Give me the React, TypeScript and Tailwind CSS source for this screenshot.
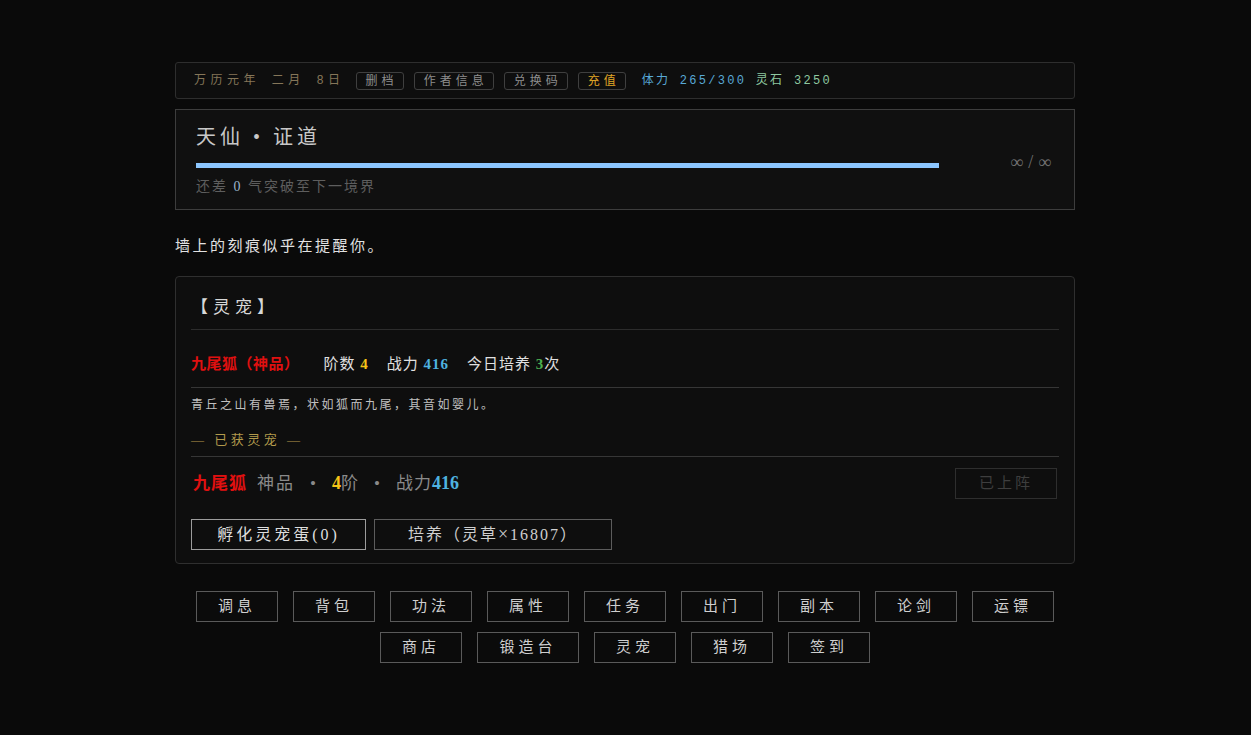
import React from 'react';

// 顶部状态栏按钮
const TopButton: React.FC<{ label: string; gold?: boolean }> = ({ label, gold }) => (
    <span
        className={`inline-flex items-center h-[18px] pl-[9px] pr-[5px] border border-[#3f3f3f] rounded-[3px] text-[12px] tracking-[4px] ${gold ? 'text-[#e0a526]' : 'text-[#8d8d8d]'}`}
    >
        {label}
    </span>
);

// 底部导航按钮
const NavButton: React.FC<{ label: string; wide?: boolean }> = ({ label, wide }) => (
    <button
        className={`h-[31px] ${wide ? 'w-[102px]' : 'w-[82px]'} border border-[#5a5a5a] bg-[#0b0b0b] text-[#cfcfcf] text-[15px] tracking-[4px] flex items-center justify-center`}
    >
        {label}
    </button>
);

const navRow1 = ['调息', '背包', '功法', '属性', '任务', '出门', '副本', '论剑', '运镖'];
const navRow2 = ['商店', '锻造台', '灵宠', '猎场', '签到'];

const mono = { fontFamily: '"Liberation Mono", "Noto Sans CJK SC", monospace' };

const App: React.FC = () => {
    return (
        <div
            className="min-h-[735px] bg-[#0a0a0a] text-[#ccc] pt-[62px]"
            style={{ fontFamily: '"Liberation Serif", "Noto Sans CJK SC", serif' }}
        >
            <div className="w-[900px] ml-[175px]">
                {/* 状态栏 */}
                <div className="h-[37px] border border-[#2e2e2e] rounded-[3px] bg-[#0e0e0e] flex items-center gap-[10px] px-[18px] text-[12px]">
                    <span className="text-[#857659] tracking-[4.5px] mr-[1px]" style={mono}>万历元年 二月 8日</span>
                    <TopButton label="删档" />
                    <TopButton label="作者信息" />
                    <TopButton label="兑换码" />
                    <TopButton label="充值" gold />
                    <span className="tracking-[2.3px] ml-[6px]" style={mono}>
                        <span className="text-[#58a9d6]">体力 265/300 </span>
                        <span className="text-[#8fc9a0]">灵石 3250</span>
                    </span>
                </div>

                {/* 境界 */}
                <div className="mt-[10px] h-[101px] border border-[#3d3d3d] bg-[#101010] flex items-center pl-[20px] pr-[18px]">
                    <div className="flex-1">
                        <div className="text-[20px] text-[#c8c8c8] tracking-[4px] leading-[28px] mt-[1px]">天仙 • 证道</div>
                        <div className="mt-[12px] h-[5px] w-[743px] bg-[#8cc6ff]" />
                        <div className="mt-[8px] text-[14px] text-[#5e5e5e] tracking-[2px]">
                            还差 <span className="text-[#9ab4cc]">0</span> 气突破至下一境界
                        </div>
                    </div>
                    <div className="text-[18px] text-[#6f6f6f] tracking-[5px] mt-[6px]">∞/∞</div>
                </div>

                {/* 提示 */}
                <div className="mt-[25px] text-[15px] text-[#e2e2e2] tracking-[2.5px] leading-[22px]">墙上的刻痕似乎在提醒你。</div>

                {/* 灵宠面板 */}
                <div className="mt-[19px] border border-[#2f2f2f] rounded-[4px] bg-[#0e0e0e] px-[15px] pt-[20px] pb-[13px]">
                    <div className="text-[17px] text-[#d8d8d8] tracking-[5px] leading-[22px] pb-[10px] border-b border-[#2c2c2c]">【灵宠】</div>

                    <div className="flex items-center pt-[25px] pb-[14px] leading-[18px] border-b border-[#363636] text-[15px]">
                        <span className="text-[#e01010] font-bold tracking-[0.5px]">九尾狐（神品）</span>
                        <span className="ml-[24px] text-[#e0e0e0] tracking-[1px]">
                            阶数 <b className="text-[#f5c518]">4</b>
                        </span>
                        <span className="ml-[18px] text-[#e0e0e0] tracking-[1px]">
                            战力 <b className="text-[#4fb3e0]">416</b>
                        </span>
                        <span className="ml-[18px] text-[#e0e0e0] tracking-[1px]">
                            今日培养 <b className="text-[#4caf50]">3</b>次
                        </span>
                    </div>

                    <div className="pt-[9px] text-[12px] text-[#c0c0c0] tracking-[2.5px] leading-[16px]">青丘之山有兽焉，状如狐而九尾，其音如婴儿。</div>
                    <div className="mt-[18px] text-[13px] text-[#b29a4c] tracking-[3.5px] leading-[18px] pb-[7px] border-b border-[#363636]">— 已获灵宠 —</div>

                    <div className="flex items-center justify-between pt-[11px]">
                        <div className="flex items-center text-[17px] text-[#8a8a8a] tracking-[1px]">
                            <span className="text-[#e01010] font-bold ml-[2px]">九尾狐</span>
                            <span className="ml-[10px] tracking-[2px]">神品</span>
                            <span className="mx-[15px]">•</span>
                            <span>
                                <b className="text-[#f5c518] text-[18px] tracking-normal">4</b>阶
                            </span>
                            <span className="mx-[15px]">•</span>
                            <span>
                                战力<b className="text-[#4fb3e0] text-[18px] tracking-normal">416</b>
                            </span>
                        </div>
                        <button className="w-[102px] h-[31px] mr-[2px] border border-[#2e2e2e] text-[15px] text-[#3e3e3e] tracking-[3px]">已上阵</button>
                    </div>

                    <div className="flex gap-[8px] mt-[20px]">
                        <button className="w-[175px] h-[31px] border border-[#9c9c9c] text-[16px] text-[#dedede] tracking-[3px]">孵化灵宠蛋(0)</button>
                        <button className="w-[238px] h-[31px] border border-[#5c5c5c] text-[16px] text-[#cfcfcf] tracking-[2px]">
                            培养（灵草<span className="text-[18px]">×</span>16807）
                        </button>
                    </div>
                </div>

                {/* 底部导航 */}
                <div className="mt-[27px] flex flex-col items-center gap-[10px]">
                    <div className="flex gap-[15px]">
                        {navRow1.map((n) => (
                            <NavButton key={n} label={n} />
                        ))}
                    </div>
                    <div className="flex gap-[15px]">
                        {navRow2.map((n) => (
                            <NavButton key={n} label={n} wide={n === '锻造台'} />
                        ))}
                    </div>
                </div>
            </div>
        </div>
    );
};

export default App;
